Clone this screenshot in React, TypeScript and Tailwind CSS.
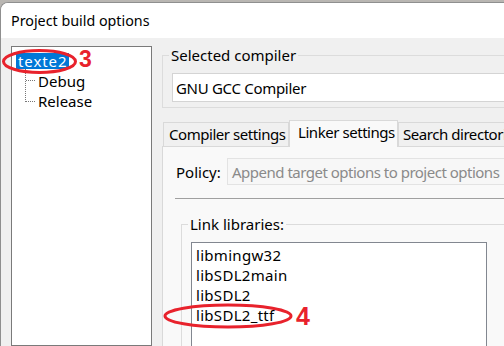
import React from "react";

const font = { fontFamily: '"Noto Sans", "Open Sans", sans-serif' };

export default function App() {
  const libs = ["libmingw32", "libSDL2main", "libSDL2", "libSDL2_ttf"];
  return (
    <div
      className="relative w-[504px] h-[346px] overflow-hidden bg-[#b9b6b2] text-[15px] text-black"
      style={font}
    >
      <div className="mt-[2px] h-[344px] flex flex-col rounded-tl-[8px] border-l border-t border-[#8f8f8f] bg-white overflow-hidden">
        {/* title bar */}
        <div className="h-[35px] shrink-0 bg-white pl-[10px] flex items-center leading-[20px] text-[14.3px]">
          Project build options
        </div>
        {/* body */}
        <div className="flex-1 flex bg-[#f0f0f0] min-h-0">
          {/* tree */}
          <div className="pl-[10px] pt-[8px] shrink-0 flex flex-col">
            <div className="w-[141px] flex-1 border border-[#7a7a7a] bg-white pt-[4px] pl-[4px]">
              <div className="h-[20px] flex items-center">
                <span className="bg-[#0078d7] text-white px-[2px] leading-[16px] tracking-[0.9px]">texte2</span>
              </div>
              <div className="flex">
                <div className="w-[9px]" />
                <svg width="13" height="40" className="shrink-0 mt-[-2px]">
                  <line x1="0.5" y1="0" x2="0.5" y2="33" stroke="#777" strokeDasharray="1 1" />
                  <line x1="1" y1="11.5" x2="10" y2="11.5" stroke="#777" strokeDasharray="1 1" />
                  <line x1="1" y1="32.5" x2="10" y2="32.5" stroke="#777" strokeDasharray="1 1" />
                </svg>
                <div className="flex flex-col">
                  <div className="h-[20px] leading-[20px]">Debug</div>
                  <div className="h-[20px] leading-[20px]">Release</div>
                </div>
              </div>
            </div>
          </div>
          {/* right column */}
          <div className="flex-1 flex flex-col pl-[10px] min-w-0">
            <fieldset className="mt-[8px] w-[380px] shrink-0 border border-[#dcdcdc] px-[6px] pb-[5px] m-0">
              <legend className="px-[2px] leading-[18px]">Selected compiler</legend>
              <div className="mt-[9px] ml-[3px] h-[29px] border border-[#d4d4d4] bg-white pl-[3px] flex items-center leading-[20px] tracking-[-0.3px]">
                GNU GCC Compiler
              </div>
            </fieldset>
            {/* tabs */}
            <div className="mt-[12px] flex items-end pl-[1px] relative z-10 whitespace-nowrap tracking-[-0.45px]">
              <div className="w-[126px] h-[24px] shrink-0 overflow-hidden border border-b-0 border-[#d9d9d9] bg-[#f0f0f0] pl-[5px] leading-[22px]">
                Compiler settings
              </div>
              <div className="w-[109px] h-[27px] shrink-0 overflow-hidden border border-b-0 border-[#d9d9d9] bg-[#f9f9f9] -mb-[1px] pl-[8px] leading-[22px]">
                Linker settings
              </div>
              <div className="w-[130px] h-[24px] shrink-0 overflow-hidden border border-b-0 border-[#d9d9d9] bg-[#f0f0f0] pl-[4px] leading-[22px]">
                Search directories
              </div>
            </div>
            <div className="flex-1 w-[400px] border border-[#d9d9d9] bg-[#f9f9f9] pl-[12px] pt-[11px] flex flex-col">
              <div className="flex items-center pl-[1px]">
                <div className="w-[51px] leading-[20px]">Policy:</div>
                <div className="h-[27px] w-[300px] border border-[#e3e3e3] bg-[#f7f7f7] pl-[4px] flex items-center text-[#8a8a8a] whitespace-nowrap leading-[20px] tracking-[-0.5px]">
                  Append target options to project options
                </div>
              </div>
              <div className="mt-[13px] h-px bg-[#a0a0a0]" />
              <fieldset className="mt-[16px] ml-[6px] flex-1 border border-[#dcdcdc] border-b-0 px-[6px] m-0 min-w-0">
                <legend className="px-[2px] leading-[18px]">Link libraries:</legend>
                <div className="mt-[9px] ml-[3px] w-[296px] h-[120px] border border-[#828790] bg-white pt-[2px] pl-[4px] tracking-[0.3px]">
                  {libs.map((l) => (
                    <div key={l} className="h-[20px] leading-[20px]">
                      {l}
                    </div>
                  ))}
                </div>
              </fieldset>
            </div>
          </div>
        </div>
      </div>

      {/* annotations */}
      <svg className="absolute left-0 top-0 pointer-events-none" width="504" height="346">
        <ellipse cx="39.5" cy="61.5" rx="36" ry="11" fill="none" stroke="#e8222c" strokeWidth="3" />
        <ellipse cx="228" cy="316" rx="63" ry="11" fill="none" stroke="#e8222c" strokeWidth="3" />
      </svg>
      <div
        className="absolute left-[79px] top-[45px] text-[23px] font-bold text-[#e8222c] leading-[28px]"
        style={{ fontFamily: '"Liberation Sans", Arial, sans-serif' }}
      >
        3
      </div>
      <div
        className="absolute left-[296px] top-[302px] text-[25px] font-bold text-[#e8222c] leading-[28px]"
        style={{ fontFamily: '"Liberation Sans", Arial, sans-serif' }}
      >
        4
      </div>
    </div>
  );
}
